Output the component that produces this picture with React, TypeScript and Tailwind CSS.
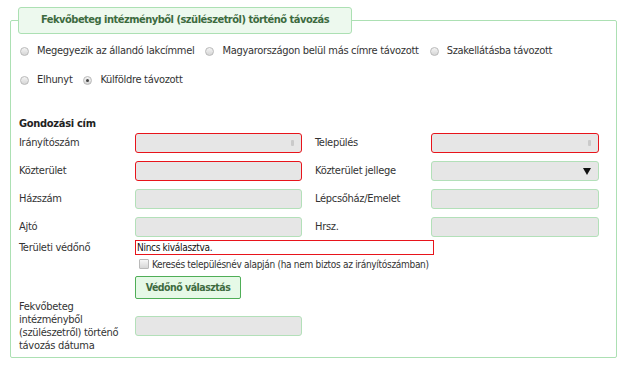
const radios = [
  [
    { label: "Megegyezik az állandó lakcímmel", checked: false },
    { label: "Magyarországon belül más címre távozott", checked: false },
    { label: "Szakellátásba távozott", checked: false },
  ],
  [
    { label: "Elhunyt", checked: false },
    { label: "Külföldre távozott", checked: true },
  ],
];

type Field = { label: string; invalid?: boolean; kind?: "spin" | "select" };

const rows: [Field, Field][] = [
  [
    { label: "Irányítószám", invalid: true, kind: "spin" },
    { label: "Település", invalid: true, kind: "spin" },
  ],
  [
    { label: "Közterület", invalid: true },
    { label: "Közterület jellege", kind: "select" },
  ],
  [{ label: "Házszám" }, { label: "Lépcsőház/Emelet" }],
  [{ label: "Ajtó" }, { label: "Hrsz." }],
];

function Radio({ checked }: { checked: boolean }) {
  return (
    <span className="w-[9px] h-[9px] rounded-full border border-[#b9b9b9] bg-gradient-to-b from-[#f4f4f4] to-[#d6d6d6] flex items-center justify-center shrink-0">
      {checked && <span className="w-[3px] h-[3px] rounded-full bg-[#444]" />}
    </span>
  );
}

function Input({ field, width }: { field: Field; width: string }) {
  return (
    <div
      className={`${width} h-[20px] rounded-[3px] border bg-[#e6e6e6] flex items-center justify-end pr-[6px] ${
        field.invalid ? "border-[#e8141b]" : "border-[#b3e0b9]"
      }`}
    >
      {field.kind === "spin" && (
        <span className="w-[3px] h-[6px] rounded-[1px] bg-[#cacaca] mr-[1px]" />
      )}
      {field.kind === "select" && (
        <svg width="8" height="7" viewBox="0 0 8 7" className="mr-[1px]">
          <path d="M0 0h8L4 7z" fill="#111" />
        </svg>
      )}
    </div>
  );
}

export default function App() {
  return (
    <div
      className="bg-white w-[627px] h-[365px] pl-[10px] pr-[10px] text-[#333] text-[11px] tracking-[-0.3px]"
      style={{ fontFamily: '"DejaVu Sans Condensed", "DejaVu Sans", sans-serif' }}
    >
      <fieldset className="w-[607px] border border-[#ace0b3] rounded-[2px] px-[8px] pb-[5px] mt-[7px]">
        <legend className="w-[334px] h-[27px] ml-[-1px] rounded-[3px] border border-[#ace0b3] bg-[#edf9ee] text-[#3d6b3f] font-bold text-[11px] tracking-[-0.5px] flex items-center justify-center">
          Fekvőbeteg intézményből (szülészetről) történő távozás
        </legend>

        {/* Távozás módja */}
        <div className="mt-[9px] flex flex-col gap-[13px]">
          {radios.map((line, i) => (
            <div key={i} className="flex items-center gap-[11px] h-[16px] pl-[1px]">
              {line.map((r) => (
                <label key={r.label} className="flex items-center gap-[8px]">
                  <Radio checked={r.checked} />
                  <span>{r.label}</span>
                </label>
              ))}
            </div>
          ))}
        </div>

        <div className="mt-[28px] font-bold h-[16px] leading-[16px] text-[#222]">Gondozási cím</div>

        <div className="mt-[1px] flex flex-col gap-[8px]">
          {rows.map(([a, b]) => (
            <div key={a.label} className="flex items-center">
              <span className="w-[116px]">{a.label}</span>
              <Input field={a} width="w-[167px]" />
              <span className="w-[116px] ml-[13px]">{b.label}</span>
              <Input field={b} width="w-[168px]" />
            </div>
          ))}
        </div>

        {/* Területi védőnő */}
        <div className="mt-[3px] flex items-start">
          <span className="w-[116px] leading-[15px]">Területi védőnő</span>
          <div className="flex flex-col">
            <div className="w-[299px] h-[15px] border border-[#e8141b] bg-white text-[#111] text-[10px] leading-[13px] pl-[1px]">
              Nincs kiválasztva.
            </div>
            <label className="mt-[3px] flex items-center gap-[3px] pl-[4px] text-[10px] h-[12px]">
              <span className="w-[10px] h-[10px] rounded-[1px] border border-[#b9b9b9] bg-gradient-to-b from-[#f6f6f6] to-[#d6d6d6] shrink-0" />
              <span>Keresés településnév alapján (ha nem biztos az irányítószámban)</span>
            </label>
            <button className="mt-[6px] w-[106px] h-[23px] rounded-[2px] border border-[#4fae57] bg-[#e6f9e7] text-[#3d6b3f] font-bold text-[10.5px] tracking-[-0.5px]">
              Védőnő választás
            </button>
          </div>
        </div>

        {/* Távozás dátuma */}
        <div className="mt-[1px] flex items-center">
          <span className="w-[116px] pr-[6px] leading-[13px]">
            Fekvőbeteg intézményből (szülészetről) történő távozás dátuma
          </span>
          <div className="w-[167px] h-[20px] rounded-[3px] border border-[#b3e0b9] bg-[#e6e6e6]" />
        </div>
      </fieldset>
    </div>
  );
}
